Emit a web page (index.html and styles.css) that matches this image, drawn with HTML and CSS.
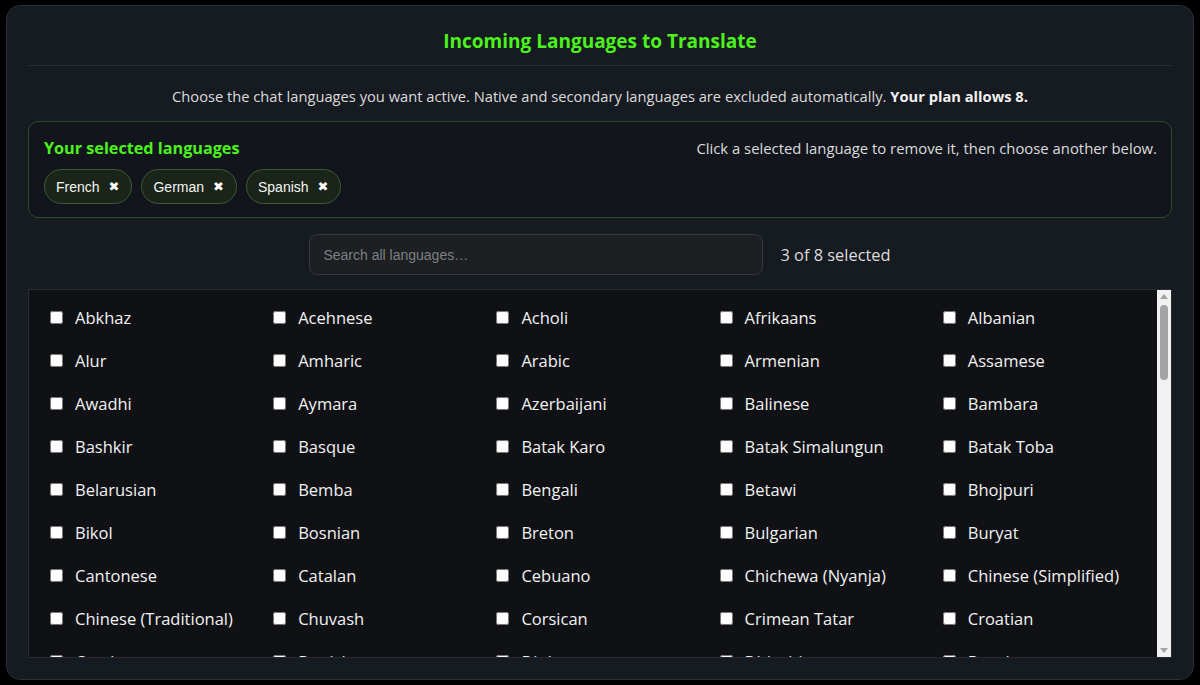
FILE: index.html
```html
<!DOCTYPE html>
<html lang="en">
<head>
<meta charset="utf-8">
<title>Incoming Languages to Translate</title>
<link rel="stylesheet" href="styles.css">
</head>
<body>
<div class="panel">
  <h2 class="title">Incoming Languages to Translate</h2>
  <p class="desc">Choose the chat languages you want active. Native and secondary languages are excluded automatically. <strong>Your plan allows 8.</strong></p>
  <section class="selected">
    <div class="selected-head">
      <h3 class="selected-title">Your selected languages</h3>
      <span class="hint">Click a selected language to remove it, then choose another below.</span>
    </div>
    <div class="chips">
      <button class="chip">French <span class="x">✖</span></button>
      <button class="chip">German <span class="x">✖</span></button>
      <button class="chip">Spanish <span class="x">✖</span></button>
    </div>
  </section>
  <div class="search-row">
    <input class="search" type="text" placeholder="Search all languages…">
    <span class="count">3 of 8 selected</span>
  </div>
  <div class="list-frame">
    <div class="list">
      <label class="item"><input type="checkbox"><span>Abkhaz</span></label>
      <label class="item"><input type="checkbox"><span>Acehnese</span></label>
      <label class="item"><input type="checkbox"><span>Acholi</span></label>
      <label class="item"><input type="checkbox"><span>Afrikaans</span></label>
      <label class="item"><input type="checkbox"><span>Albanian</span></label>
      <label class="item"><input type="checkbox"><span>Alur</span></label>
      <label class="item"><input type="checkbox"><span>Amharic</span></label>
      <label class="item"><input type="checkbox"><span>Arabic</span></label>
      <label class="item"><input type="checkbox"><span>Armenian</span></label>
      <label class="item"><input type="checkbox"><span>Assamese</span></label>
      <label class="item"><input type="checkbox"><span>Awadhi</span></label>
      <label class="item"><input type="checkbox"><span>Aymara</span></label>
      <label class="item"><input type="checkbox"><span>Azerbaijani</span></label>
      <label class="item"><input type="checkbox"><span>Balinese</span></label>
      <label class="item"><input type="checkbox"><span>Bambara</span></label>
      <label class="item"><input type="checkbox"><span>Bashkir</span></label>
      <label class="item"><input type="checkbox"><span>Basque</span></label>
      <label class="item"><input type="checkbox"><span>Batak Karo</span></label>
      <label class="item"><input type="checkbox"><span>Batak Simalungun</span></label>
      <label class="item"><input type="checkbox"><span>Batak Toba</span></label>
      <label class="item"><input type="checkbox"><span>Belarusian</span></label>
      <label class="item"><input type="checkbox"><span>Bemba</span></label>
      <label class="item"><input type="checkbox"><span>Bengali</span></label>
      <label class="item"><input type="checkbox"><span>Betawi</span></label>
      <label class="item"><input type="checkbox"><span>Bhojpuri</span></label>
      <label class="item"><input type="checkbox"><span>Bikol</span></label>
      <label class="item"><input type="checkbox"><span>Bosnian</span></label>
      <label class="item"><input type="checkbox"><span>Breton</span></label>
      <label class="item"><input type="checkbox"><span>Bulgarian</span></label>
      <label class="item"><input type="checkbox"><span>Buryat</span></label>
      <label class="item"><input type="checkbox"><span>Cantonese</span></label>
      <label class="item"><input type="checkbox"><span>Catalan</span></label>
      <label class="item"><input type="checkbox"><span>Cebuano</span></label>
      <label class="item"><input type="checkbox"><span>Chichewa (Nyanja)</span></label>
      <label class="item"><input type="checkbox"><span>Chinese (Simplified)</span></label>
      <label class="item"><input type="checkbox"><span>Chinese (Traditional)</span></label>
      <label class="item"><input type="checkbox"><span>Chuvash</span></label>
      <label class="item"><input type="checkbox"><span>Corsican</span></label>
      <label class="item"><input type="checkbox"><span>Crimean Tatar</span></label>
      <label class="item"><input type="checkbox"><span>Croatian</span></label>
      <label class="item"><input type="checkbox"><span>Czech</span></label>
      <label class="item"><input type="checkbox"><span>Danish</span></label>
      <label class="item"><input type="checkbox"><span>Dinka</span></label>
      <label class="item"><input type="checkbox"><span>Dhivehi</span></label>
      <label class="item"><input type="checkbox"><span>Dogri</span></label>
    </div>
    <div class="scrollbar" aria-hidden="true">
      <svg class="arrow" width="14" height="15" viewBox="0 0 14 15"><polygon points="7,4 11,9 3,9" fill="#a3a3a3"/></svg>
      <div class="thumb"></div>
      <div class="spacer"></div>
      <svg class="arrow" width="14" height="15" viewBox="0 0 14 15"><polygon points="3,6 11,6 7,11" fill="#a3a3a3"/></svg>
    </div>
  </div>
</div>
</body>
</html>
```

FILE: styles.css
```css
html, body {
  background: #000000;
}
body {
  margin: 5px 6px;
  font-family: "Open Sans", "Noto Sans", sans-serif;
  color: #e6e6e6;
}
.panel {
  box-sizing: border-box;
  height: 675px;
  padding: 23px 21px 21px;
  background: #161a21;
  border: 1px solid #2a2f38;
  border-radius: 14px;
  display: flex;
  flex-direction: column;
}
.title {
  margin: 0;
  padding-bottom: 12px;
  border-bottom: 1px solid #2a2f38;
  text-align: center;
  font-size: 19px;
  line-height: 24px;
  font-weight: 700;
  color: #4cf21c;
}
.desc {
  margin: 20px 0 15px;
  text-align: center;
  font-size: 14.7px;
  line-height: 20px;
  color: #dcdcdc;
}
.desc strong {
  color: #f2f2f2;
}
.selected {
  border: 1px solid #2f4a2c;
  border-radius: 10px;
  padding: 15px 14px 13px 15px;
  background: #12161c;
}
.selected-head {
  display: flex;
  justify-content: space-between;
  align-items: center;
}
.selected-title {
  margin: 0;
  font-size: 16.2px;
  line-height: 22px;
  font-weight: 700;
  color: #4cf21c;
}
.hint {
  font-size: 14.85px;
  line-height: 22px;
  color: #dcdcdc;
}
.chips {
  display: flex;
  gap: 9px;
  margin-top: 10px;
}
.chip {
  box-sizing: border-box;
  height: 35px;
  padding: 0 12px 0 11px;
  display: flex;
  align-items: center;
  gap: 9px;
  background: #1a2418;
  border: 1px solid #3b5a35;
  border-radius: 18px;
  color: #f4f4f4;
  font-family: "Liberation Sans", Arial, sans-serif;
  font-size: 14px;
}
.x {
  font-family: "DejaVu Sans", sans-serif;
  font-size: 13px;
  font-weight: 700;
  color: #ffffff;
}
.search-row {
  display: flex;
  justify-content: center;
  align-items: center;
  gap: 17px;
  margin: 16px 0 14px;
}
.search {
  box-sizing: border-box;
  width: 454px;
  height: 41px;
  padding: 0 13px;
  background: #1d1f23;
  border: 1px solid #35383e;
  border-radius: 8px;
  color: #e6e6e6;
  font-family: "Liberation Sans", Arial, sans-serif;
  font-size: 14px;
  outline: none;
}
.search::placeholder {
  color: #7c7f86;
}
.count {
  font-size: 16.4px;
  color: #dcdcdc;
}
.list-frame {
  flex: 1;
  min-height: 0;
  display: flex;
  background: #0f1115;
  border: 1px solid #262a32;
}
.list {
  flex: 1;
  min-width: 0;
  overflow: hidden;
  padding: 6px 4px 0 8px;
  display: grid;
  grid-template-columns: repeat(5, 1fr);
  align-content: start;
}
.scrollbar {
  width: 14px;
  flex: none;
  background: #f1f1f1;
  display: flex;
  flex-direction: column;
  align-items: center;
}
.arrow {
  display: block;
  flex: none;
}
.thumb {
  width: 8px;
  height: 75px;
  border-radius: 4px;
  background: #a3a3a3;
  flex: none;
}
.spacer {
  flex: 1;
}
.item {
  display: flex;
  align-items: center;
  gap: 12px;
  padding: 10px 0 10px 13px;
  font-size: 16.5px;
  line-height: 23px;
  color: #f2f2f2;
  white-space: nowrap;
}
.item input {
  margin: 0;
  width: 13px;
  height: 13px;
  flex: none;
}
```
